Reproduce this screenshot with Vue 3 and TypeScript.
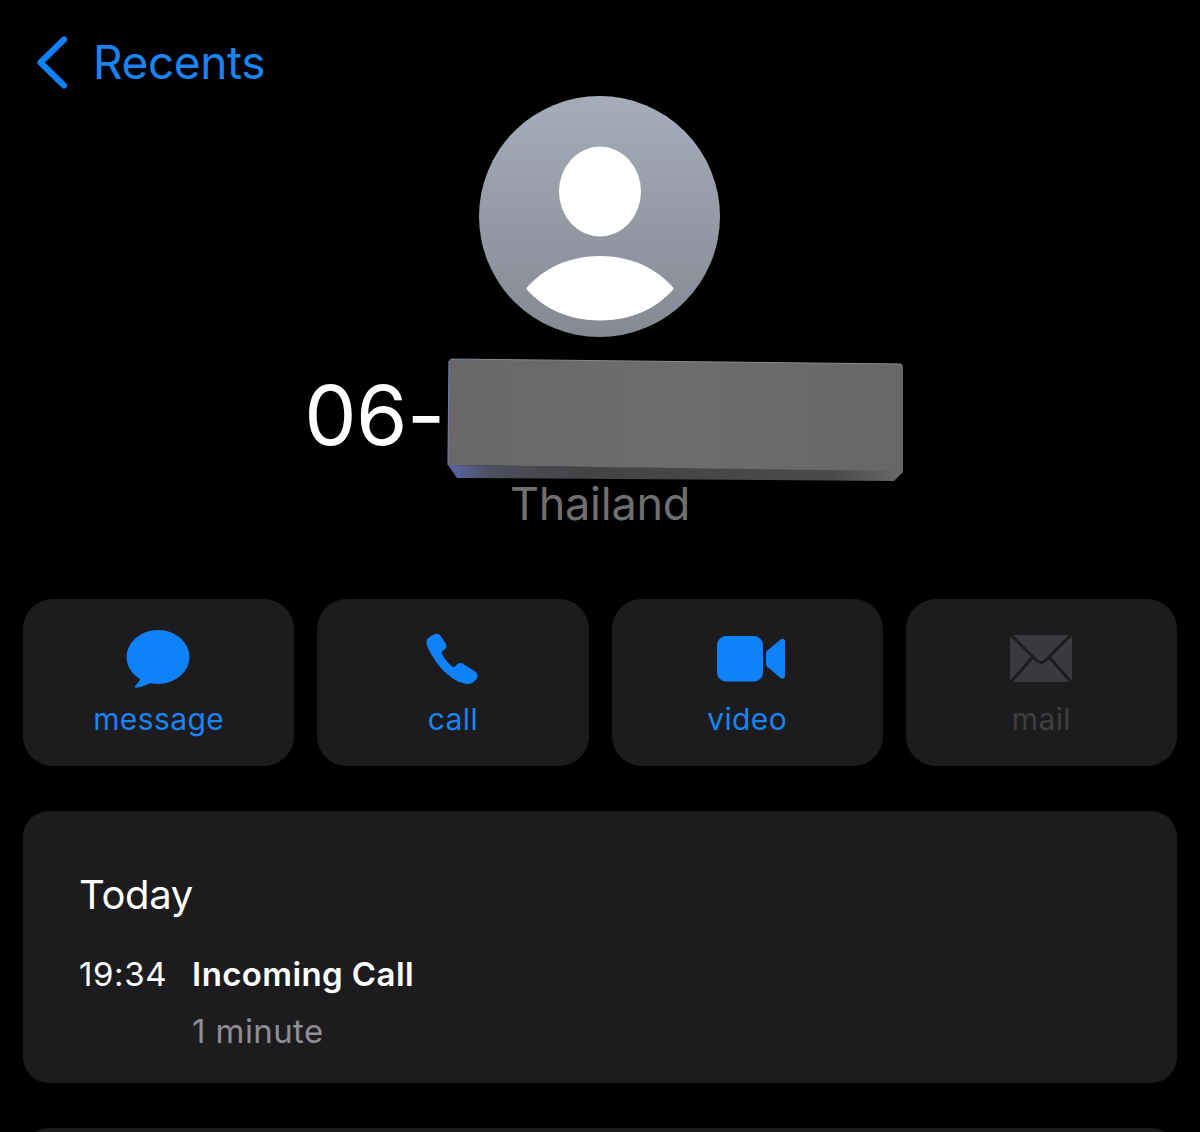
<script setup lang="ts">
interface Action {
  id: string;
  label: string;
  disabled?: boolean;
}

const actions: Action[] = [
  { id: 'message', label: 'message' },
  { id: 'call', label: 'call' },
  { id: 'video', label: 'video' },
  { id: 'mail', label: 'mail', disabled: true },
];
</script>

<template>
  <div class="screen">
    <!-- Nav bar -->
    <header class="nav">
      <svg class="chevron" width="32" height="53" viewBox="0 0 32 53">
        <path d="M28 3.5 L4.5 26.5 L28 49.5" fill="none" stroke="#0f82fa" stroke-width="6.2" stroke-linecap="round" stroke-linejoin="round" />
      </svg>
      <span class="nav-title">Recents</span>
    </header>

    <!-- Contact -->
    <section class="contact">
      <svg class="avatar" width="241" height="241" viewBox="0 0 241 241">
        <defs>
          <linearGradient id="avatar-bg" x1="0" y1="0" x2="0" y2="1">
            <stop offset="0" stop-color="#a6acb9" />
            <stop offset="1" stop-color="#858994" />
          </linearGradient>
        </defs>
        <circle cx="120.5" cy="120.5" r="120.5" fill="url(#avatar-bg)" />
        <ellipse cx="121" cy="95.5" rx="41" ry="45" fill="#fff" />
        <path d="M47 192.5 C64.5 172 90.5 160 121 160 C151.5 160 177.5 172 195 192.5 C177.5 213 151.5 224.5 121 224.5 C90.5 224.5 64.5 213 47 192.5 Z" fill="#fff" />
      </svg>

      <div class="number-row">
        <span class="number">06-</span>
        <svg class="redact" width="458" height="124" viewBox="0 0 458 124">
          <defs>
            <linearGradient id="redact-top" x1="0" y1="0" x2="1" y2="0">
              <stop offset="0" stop-color="#68686a" />
              <stop offset="0.5" stop-color="#6d6d6d" />
              <stop offset="1" stop-color="#676767" />
            </linearGradient>
            <linearGradient id="redact-side" x1="0" y1="0" x2="1" y2="0">
              <stop offset="0" stop-color="#5a67a8" />
              <stop offset="0.1" stop-color="#4c4e5c" />
              <stop offset="0.3" stop-color="#444446" />
              <stop offset="0.85" stop-color="#4a4a4a" />
              <stop offset="1" stop-color="#6a6a6a" />
            </linearGradient>
            <linearGradient id="redact-edge" x1="0" y1="0" x2="1" y2="0">
              <stop offset="0" stop-color="#7180c0" />
              <stop offset="0.08" stop-color="#8a8a90" />
              <stop offset="1" stop-color="#8c8c8c" />
            </linearGradient>
          </defs>
          <path d="M1 107 L10 120 L447 123 L456 114 L456 112 Z" fill="url(#redact-side)" />
          <path d="M2 3 Q2 1 4 1 L454 6 Q456 6 456 8 L456 113 L1 107 Z" fill="url(#redact-top)" />
          <path d="M4 1 L454 6" stroke="url(#redact-edge)" stroke-width="1" fill="none" />
          <path d="M2 3 L1 107" stroke="#6f7aa8" stroke-width="1.2" fill="none" />
        </svg>
      </div>

      <div class="region">Thailand</div>
    </section>

    <!-- Action buttons -->
    <section class="actions">
      <div
        v-for="action in actions"
        :key="action.id"
        class="action"
        :class="{ disabled: action.disabled }"
      >
        <div class="action-icon" :class="action.id">
          <svg v-if="action.id === 'message'" width="64" height="58" viewBox="0 0 64 58">
            <ellipse cx="32" cy="27" rx="31.5" ry="27" fill="#0f82fa" />
            <path d="M15 44 C15 50 12 53 9.5 55.5 C8 57 9 58 11.5 57.5 C17 56.5 23 54 28 51 Z" fill="#0f82fa" />
          </svg>
          <svg v-else-if="action.id === 'call'" width="52" height="52" viewBox="0 0 52 52">
            <path d="M8 1.5 C11 0 13.5 1 15 3.5 L19.5 10.5 C21 13 20.5 15 18.5 16.5 L16.5 18 C15.5 19 15.5 20 16 21 C18 25 22 30 25.5 33 C27 34.2 28 34.2 29.2 33.2 L31 31.5 C33 29.5 35.5 29.5 37.5 31 L49 38.5 C52 40.5 52.5 43.5 50.5 46 C48 49.5 44.5 51.5 40.5 51 C30 49.5 19 41 11 30 C5 21 0.5 14 0.5 9 C0.5 6 3.5 3.5 8 1.5 Z" fill="#0f82fa" />
          </svg>
          <svg v-else-if="action.id === 'video'" width="68" height="46" viewBox="0 0 68 46">
            <rect x="0" y="0" width="46" height="45.5" rx="9" fill="#0f82fa" />
            <path d="M50 15 L63.5 3.5 C65.5 2 68 3 68 5.5 L68 40 C68 42.5 65.5 43.5 63.5 42 L50 30.5 C49.4 30 49 29 49 28 L49 17.5 C49 16.5 49.4 15.6 50 15 Z" fill="#0f82fa" />
          </svg>
          <svg v-else width="62" height="47" viewBox="0 0 62 47">
            <rect x="0" y="0" width="62" height="47" rx="2" fill="#3a3a3e" />
            <path d="M1 0 L26 25 Q31 30 36 25 L61 0" fill="none" stroke="#1c1c1e" stroke-width="3" />
            <path d="M1 47 L22 23 M61 47 L40 23" fill="none" stroke="#1c1c1e" stroke-width="3" />
          </svg>
        </div>
        <span class="action-label">{{ action.label }}</span>
      </div>
    </section>

    <!-- Call log -->
    <section class="card log">
      <div class="log-date">Today</div>
      <div class="log-row">
        <span class="log-time">19:34</span>
        <div>
          <div class="log-type">Incoming Call</div>
          <div class="log-duration">1 minute</div>
        </div>
      </div>
    </section>

    <section class="card next"></section>
  </div>
</template>

<style scoped>
.screen {
  width: 1200px;
  height: 1132px;
  overflow: hidden;
  background: #000;
  font-family: Inter, "Noto Sans", sans-serif;
  color: #fff;
  padding: 34px 23px 0;
  box-sizing: border-box;
}

.nav {
  display: flex;
  align-items: center;
  gap: 25px;
  height: 56px;
  padding-left: 13px;
}

.nav-title {
  font-size: 46px;
  line-height: 56px;
  color: #1a84f2;
  letter-spacing: -0.4px;
}

.contact {
  display: flex;
  flex-direction: column;
  align-items: center;
}

.avatar {
  display: block;
  margin-top: 6px;
  margin-left: -1px;
}

.number-row {
  display: flex;
  align-items: center;
  margin-top: 21px;
  margin-left: 9px;
  height: 124px;
}

.number {
  font-size: 83px;
  line-height: 124px;
  margin-right: 2px;
  margin-bottom: 10px;
  letter-spacing: -0.5px;
}

.redact {
  display: block;
}

.region {
  font-size: 45px;
  line-height: 50px;
  color: #6f6f6f;
  margin-top: -3px;
  letter-spacing: -0.25px;
}

.actions {
  display: grid;
  grid-template-columns: repeat(4, 1fr);
  gap: 23px;
  margin-top: 70px;
}

.action {
  height: 167px;
  border-radius: 30px;
  background: #1c1c1e;
  display: flex;
  flex-direction: column;
  align-items: center;
  color: #1a84f2;
}

.action.disabled {
  color: #3e3e41;
}

.action-icon {
  display: flex;
  align-items: center;
  justify-content: center;
  height: 58px;
  margin-top: 31px;
}

.action-icon.message {
  margin-left: -1px;
}

.action-icon.call {
  margin-left: -2px;
}

.action-icon.video {
  margin-left: 8px;
}

.action-icon.mail {
  margin-bottom: 1px;
  height: 57px;
}

.action-icon svg {
  display: block;
}

.action-label {
  font-size: 30px;
  line-height: 36px;
  margin-top: 13px;
  letter-spacing: 0.4px;
}

.card {
  background: #1c1c1e;
  border-radius: 26px;
}

.log {
  height: 272px;
  margin-top: 45px;
  padding: 59px 56px 0;
  box-sizing: border-box;
}

.log-date {
  font-size: 40px;
  line-height: 50px;
  letter-spacing: -0.3px;
}

.log-row {
  display: flex;
  gap: 25px;
  margin-top: 34px;
}

.log-time {
  font-size: 33px;
  line-height: 40px;
  letter-spacing: 0.6px;
}

.log-type {
  font-size: 33px;
  line-height: 40px;
  font-weight: 600;
  letter-spacing: 0.4px;
}

.log-duration {
  font-size: 33px;
  line-height: 40px;
  margin-top: 17px;
  color: #8e8e93;
  letter-spacing: 0.4px;
}

.next {
  height: 60px;
  margin-top: 45px;
}
</style>

<style>
body {
  background: #000;
}
</style>
